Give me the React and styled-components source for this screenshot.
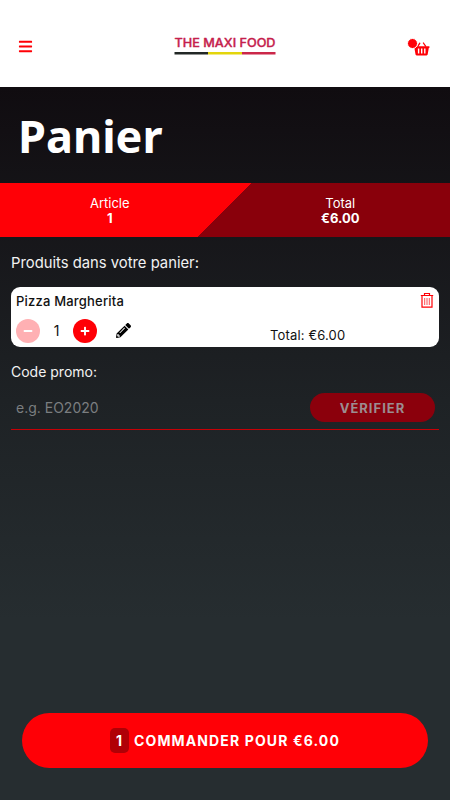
import React, { useState } from 'react'
import styled, { createGlobalStyle } from 'styled-components'
import { FaBars, FaMinus, FaPlus, FaPencilAlt } from 'react-icons/fa'

const price = 6

const formatPrice = value => '€' + value.toFixed(2)

const App = () => {
  const [count, setCount] = useState(1)
  const [code, setCode] = useState('')
  const total = formatPrice(count * price)

  return (
    <Screen>
      <GlobalStyle />
      <Header>
        <MenuButton aria-label="Menu">
          <FaBars size={15} />
        </MenuButton>
        <Logo />
        <BasketButton aria-label="Panier">
          <IconBasket />
          <Dot />
        </BasketButton>
      </Header>
      <Title>Panier</Title>
      <Summary>
        <SummaryItem>
          Article
          <strong>{count}</strong>
        </SummaryItem>
        <SummaryItem>
          Total
          <strong>{total}</strong>
        </SummaryItem>
      </Summary>
      <Content>
        <Label>Produits dans votre panier:</Label>
        <Product>
          <ProductRow>
            <ProductName>Pizza Margherita</ProductName>
            <IconTrash />
          </ProductRow>
          <Controls>
            <RoundButton
              aria-label="Moins"
              disabled={count < 2}
              onClick={() => setCount(count - 1)}
            >
              <FaMinus size={10} />
            </RoundButton>
            <Quantity>{count}</Quantity>
            <RoundButton aria-label="Plus" onClick={() => setCount(count + 1)}>
              <FaPlus size={10} />
            </RoundButton>
            <EditButton aria-label="Modifier">
              <FaPencilAlt size={15} />
            </EditButton>
            <ProductTotal>Total: {total}</ProductTotal>
          </Controls>
        </Product>
        <Label $small>Code promo:</Label>
        <Promo>
          <PromoInput
            placeholder="e.g. EO2020"
            value={code}
            onChange={e => setCode(e.target.value)}
          />
          <VerifyButton>Vérifier</VerifyButton>
        </Promo>
      </Content>
      <OrderButton>
        <Badge>{count}</Badge>
        <span>Commander pour {total}</span>
      </OrderButton>
    </Screen>
  )
}

const Logo = () => (
  <svg width="102" height="20" viewBox="0 0 102 20">
    <text
      x="0.5"
      y="9.5"
      fill="#c5204c"
      stroke="#c5204c"
      strokeWidth="0.35"
      strokeLinejoin="round"
      fontFamily="Inter, sans-serif"
      fontSize="11.5"
      fontWeight="500"
      textLength="101"
      lengthAdjust="spacingAndGlyphs"
    >
      THE MAXI FOOD
    </text>
    <path fill="#222826" d="M.5 15H34v2.5H.5z" />
    <path fill="#e3d50b" d="M34 15h34v2.5H34z" />
    <path fill="#cb2749" d="M68 15h33.5v2.5H68z" />
  </svg>
)

const IconBasket = () => (
  <svg width="17" height="15" viewBox="0 0 17 15">
    <path
      d="M5 5.2L6.8 2.2M12.6 5.2L10.4 2"
      stroke="#ff0006"
      strokeWidth="1.3"
      strokeLinecap="round"
    />
    <path
      fill="#ff0006"
      fillRule="evenodd"
      d="M.8 5.2h15.6v1.9h-.6l-1.1 6.2c-.1.8-.5 1.1-1.2 1.1H3.7c-.7 0-1.1-.3-1.2-1.1L1.4 7.1H.8zM4.9 7.4v5h1.4v-5zM8 7.4v5h1.4v-5zM11.1 7.4v5h1.4v-5z"
    />
  </svg>
)

const IconTrash = () => (
  <svg
    width="14"
    height="15"
    viewBox="0 0 14 15"
    fill="none"
    stroke="#ff0006"
    strokeWidth="1.2"
  >
    <path d="M.8 2.5h12.4M4.5 2.5v-2h5v2M2 2.5v11.7h10V2.5" />
    <path d="M4.7 5v7M7 5v7M9.3 5v7" strokeWidth="0.7" />
  </svg>
)

const GlobalStyle = createGlobalStyle`
  * {
    box-sizing: border-box;
  }
  body {
    margin: 0;
    font-family: Inter, sans-serif;
  }
  button, input {
    margin: 0;
    padding: 0;
    border: 0;
    background: none;
    font-family: inherit;
  }
`

const Screen = styled.div`
  display: flex;
  flex-direction: column;
  height: 800px;
  background: linear-gradient(#100c10 87px, #1e2225 400px, #262d30 620px);
  color: #fff;
`

const Header = styled.header`
  display: flex;
  align-items: center;
  justify-content: space-between;
  height: 87px;
  padding: 6px 20px 0 18px;
  background: #fff;
`

const MenuButton = styled.button`
  display: flex;
  width: 24px;
  color: #ff0006;
`

const BasketButton = styled.button`
  position: relative;
  display: flex;
  justify-content: flex-end;
  width: 22px;
  padding-top: 3px;
`

const Dot = styled.span`
  position: absolute;
  top: 0;
  left: -1px;
  width: 9px;
  height: 9px;
  border: 1px solid #fff;
  box-sizing: content-box;
  border-radius: 50%;
  background: #ff0006;
`

const Title = styled.h1`
  height: 96px;
  margin: 0;
  padding-left: 18px;
  font: 700 45px/98px 'Noto Sans', sans-serif;
`

const Summary = styled.div`
  display: flex;
  height: 54px;
  background: linear-gradient(135deg, #ff0006 50%, #89000b 50%);
`

const SummaryItem = styled.div`
  display: flex;
  flex: 1;
  flex-direction: column;
  align-items: center;
  padding: 13px 6px 0 0;
  font-size: 13px;
  line-height: 15px;
  &:last-child {
    padding: 13px 0 0 5px;
  }
`

const Content = styled.main`
  flex: 1;
  padding: 15px 11px 0;
`

const Label = styled.div`
  padding-top: 1px;
  color: #f2f2f2;
  font-size: ${({ $small }) => ($small ? '14px' : '14.8px')};
  line-height: 20px;
`

const Product = styled.section`
  height: 60px;
  margin: 14px 0;
  padding: 5px;
  border-radius: 9px;
  background: #fff;
  color: #111;
`

const ProductRow = styled.div`
  display: flex;
  justify-content: space-between;
  height: 27px;
  padding-top: 1px;
`

const ProductName = styled.span`
  font-size: 13px;
  font-weight: 500;
  letter-spacing: 0.2px;
  line-height: 16px;
`

const Controls = styled.div`
  display: flex;
  align-items: center;
  height: 24px;
`

const RoundButton = styled.button`
  display: flex;
  align-items: center;
  justify-content: center;
  width: 24px;
  height: 24px;
  border-radius: 50%;
  background: #ff0006;
  color: #fff;
  &:disabled {
    background: #ffb0b3;
  }
`

const Quantity = styled.span`
  width: 33px;
  margin-top: -2px;
  font-size: 14px;
  text-align: center;
`

const EditButton = styled.button`
  display: flex;
  margin: -1px 0 0 19px;
  color: #000;
`

const ProductTotal = styled.span`
  margin: 8px 0 0 139px;
  font-size: 13px;
  letter-spacing: 0.15px;
`

const Promo = styled.div`
  display: flex;
  align-items: flex-start;
  justify-content: space-between;
  height: 48px;
  padding: 11px 4px 0 5px;
  border-bottom: 1px solid #c70006;
`

const PromoInput = styled.input`
  width: 250px;
  height: 29px;
  outline: none;
  color: #fff;
  font-size: 14px;
  &::placeholder {
    color: #7b7e80;
  }
`

const VerifyButton = styled.button`
  width: 125px;
  height: 29px;
  border-radius: 15px;
  background: #8b000c;
  color: #9c8d91;
  font-size: 13px;
  font-weight: 700;
  letter-spacing: 1px;
  text-transform: uppercase;
`

const OrderButton = styled.button`
  display: flex;
  align-items: center;
  justify-content: center;
  gap: 5px;
  height: 55px;
  margin: 0 22px 32px;
  border-radius: 28px;
  background: #ff0006;
  color: #fff;
  font-size: 14px;
  font-weight: 700;
  letter-spacing: 1.12px;
  text-transform: uppercase;
`

const Badge = styled.span`
  width: 19px;
  border-radius: 5px;
  background: #b00006;
  line-height: 25px;
`

export default App
